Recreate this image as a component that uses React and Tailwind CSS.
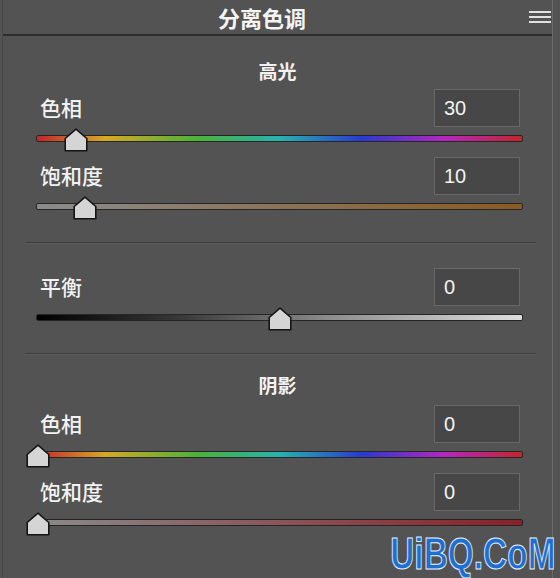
import React from 'react';

const cjk = { fontFamily: '"Noto Sans CJK SC", "Noto Sans", sans-serif' };

const Thumb = ({ left }) => (
  <svg
    className="absolute top-0 -ml-[12px]"
    style={{ left }}
    width="24"
    height="24"
    viewBox="0 0 24 24"
  >
    <path
      d="M12 1.2 L22.8 10.5 L22.8 22.8 L1.2 22.8 L1.2 10.5 Z"
      fill="#d5d5d5"
      stroke="#151515"
      strokeWidth="1.6"
      strokeLinejoin="round"
    />
  </svg>
);

const SliderRow = ({ label, value, pct, track }) => (
  <div className="flex flex-col mt-[5px] first:mt-0">
    <div className="flex h-[38px] items-center justify-between pl-[4px] pr-[3px]">
      <span className="text-[21px] font-medium text-[#f2f2f2]" style={cjk}>
        {label}
      </span>
      <div className="flex h-[38px] w-[86px] items-center border border-[#686868] bg-[#474747] pl-[9px] text-[20px] text-[#f2f2f2] font-['Liberation_Sans',sans-serif]">
        {value}
      </div>
    </div>
    <div className="relative mt-[1px] h-[24px]">
      <div className={`mt-[7px] h-[7px] rounded-[2px] border border-[#262626] ${track}`} />
      <Thumb left={`${pct}%`} />
    </div>
  </div>
);

const Heading = ({ children, className }) => (
  <div
    className={`h-[24px] text-center text-[19px] leading-[24px] font-bold text-[#f2f2f2] ${className}`}
    style={cjk}
  >
    {children}
  </div>
);

const Divider = () => <div className="ml-[22px] mr-[16px] h-[2px] border-t border-[#3c3c3c] border-b border-b-[#5c5c5c]" />;

const hue =
  'bg-[linear-gradient(to_right,#c5252a,#d8a824_14%,#4bb338_33%,#25b3b0_50%,#2a3ad0_67%,#b526c0_84%,#c5252a)]';

export default function App() {
  return (
    <div className="relative h-[578px] w-[560px] overflow-hidden bg-[#535353]">
      <div className="ml-[2px] mr-[7px] h-full border-l border-[#474747] border-r border-r-[#6a6a6a]">
        <header className="flex h-[36px] items-center border-b-2 border-[#2c2c2c]">
          <div className="flex-1 pr-[8px] text-center text-[22px] font-bold text-[#f4f4f4]" style={cjk}>
            分离色调
          </div>
          <div className="mr-[1px] flex w-[22px] flex-col gap-[3px]">
            <span className="h-[2px] bg-[#e2e2e2]" />
            <span className="h-[2px] bg-[#e2e2e2]" />
            <span className="h-[2px] bg-[#e2e2e2]" />
          </div>
        </header>

        <Heading className="mt-[23px]">高光</Heading>
        <div className="ml-[33px] mr-[29px] mt-[6px]">
          <SliderRow label="色相" value="30" pct={8.3} track={hue} />
          <SliderRow
            label="饱和度"
            value="10"
            pct={10}
            track="bg-[linear-gradient(to_right,#8c8c8c,#8a5a22)]"
          />
        </div>

        <div className="mt-[22px]">
          <Divider />
        </div>
        <div className="ml-[33px] mr-[29px] mt-[24px]">
          <SliderRow
            label="平衡"
            value="0"
            pct={50}
            track="bg-[linear-gradient(to_right,#000000,#3a3a3a_30%,#8c8c8c_60%,#dedede)]"
          />
        </div>

        <div className="mt-[22px]">
          <Divider />
        </div>
        <Heading className="mt-[18px]">阴影</Heading>
        <div className="ml-[33px] mr-[29px] mt-[8px]">
          <SliderRow label="色相" value="0" pct={0.5} track={hue} />
          <SliderRow
            label="饱和度"
            value="0"
            pct={0.5}
            track="bg-[linear-gradient(to_right,#8a8a8a,#8a2028)]"
          />
        </div>
      </div>

      <div className="absolute right-[4px] bottom-[3px] origin-right scale-x-[0.76] text-[44px] leading-[42px] font-bold text-[#1d6fd1] [-webkit-text-stroke:1px_#e8f0ff] font-['Liberation_Sans',sans-serif]">
        UiBQ.CoM
      </div>
    </div>
  );
}
